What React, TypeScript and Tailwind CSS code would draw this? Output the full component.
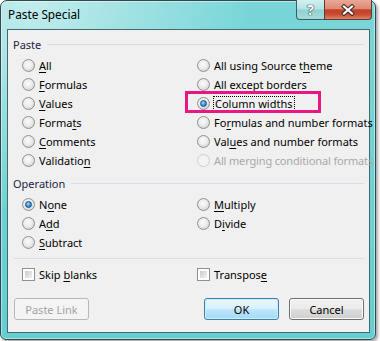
import React from "react";
import clsx from "clsx";

// "&" marks the access key letter, as in Win32 resource strings
function Accel({ text }: { text: string }) {
  const i = text.indexOf("&");
  if (i < 0) return <span>{text}</span>;
  return (
    <span>
      {text.slice(0, i)}
      <u className="underline-offset-[2px]">{text[i + 1]}</u>
      {text.slice(i + 2)}
    </span>
  );
}

function Radio({ checked, disabled }: { checked?: boolean; disabled?: boolean }) {
  return (
    <span
      className={clsx(
        "w-[13px] h-[13px] rounded-full border flex items-center justify-center shrink-0",
        disabled
          ? "border-[#cfcfcf] bg-[#f3f3f3]"
          : "border-[#8f9090] bg-[radial-gradient(circle_at_45%_40%,#fbfbfb_0%,#ececec_45%,#c4c4c4_100%)]"
      )}
    >
      {checked && (
        <span className="w-[7px] h-[7px] rounded-full border border-[#1d4d84] bg-[radial-gradient(circle_at_40%_35%,#9fdcff_0%,#3a8fdc_55%,#1b5aa0_100%)]" />
      )}
    </span>
  );
}

function Checkbox() {
  return (
    <span className="w-[13px] h-[13px] border border-[#8f9090] bg-white p-[2px] shrink-0 flex">
      <span className="flex-1 bg-[linear-gradient(135deg,#cbcbcb,#f4f4f4)]" />
    </span>
  );
}

function Option({
  label,
  checked,
  disabled,
  focused,
}: {
  label: string;
  checked?: boolean;
  disabled?: boolean;
  focused?: boolean;
}) {
  return (
    <div className="flex items-center h-[19px] gap-[3px] relative">
      <Radio checked={checked} disabled={disabled} />
      <span
        className={clsx(
          "whitespace-nowrap",
          disabled && "text-[#a9a9a9] tracking-[-0.15px]",
          focused ? "border border-dotted border-black px-px h-[15px] flex items-center" : "ml-px"
        )}
      >
        <Accel text={label} />
      </span>
      {focused && (
        <div className="absolute left-[-12px] top-[-3px] w-[136px] h-[22px] border-[3px] border-[#eb1583]" />
      )}
    </div>
  );
}

function GroupHeading({ label }: { label: string }) {
  return (
    <div className="h-[16px] flex items-center gap-[6px] text-[#1b2346]">
      <span>{label}</span>
      <div className="flex-1 h-px bg-[#d5dfe5]" />
    </div>
  );
}

function Button({ label, primary, disabled }: { label: string; primary?: boolean; disabled?: boolean }) {
  return (
    <div
      className={clsx(
        "w-[75px] h-[22px] rounded-[3px] border flex items-center justify-center",
        disabled
          ? "border-[#b5b9bc] bg-[#f4f4f4] text-[#a3a3a3]"
          : primary
          ? "border-[#3c7fb1] bg-[linear-gradient(#eaf6fd_0%,#d9f0fc_50%,#bee6fd_51%,#a7d9f5_100%)] shadow-[inset_0_0_0_1px_#c8f0ff]"
          : "border-[#707070] bg-[linear-gradient(#f2f2f2_0%,#ebebeb_50%,#dddddd_51%,#cfcfcf_100%)] shadow-[inset_0_0_0_1px_#fbfbfb]"
      )}
    >
      {label}
    </div>
  );
}

export default function App() {
  return (
    <div className="w-[380px] h-[341px] bg-white font-['Noto_Sans',sans-serif] text-[11px] leading-none text-black">
      <div className="w-[376px] h-[340px] flex flex-col pl-[6px] pr-[5px] pb-[6px] rounded-t-[7px] rounded-b-[6px] border border-[#34474a] bg-[radial-gradient(ellipse_at_8%_0%,rgba(255,255,255,0.55)_0%,rgba(255,255,255,0)_45%),linear-gradient(#79d6d8,#63cfd2)] shadow-[inset_0_0_0_1px_rgba(255,255,255,0.45),2px_2px_3px_rgba(0,0,0,0.35)]">
        {/* title bar */}
        <div className="h-[28px] flex items-start">
          <span className="ml-px self-center text-[11.8px]">Paste Special</span>
          <div className="ml-auto -mt-px -mr-[2px] flex h-[20px]">
            <div className="w-[28px] h-full rounded-bl-[4px] border border-t-0 border-r-0 border-[#3f5c5e] bg-[linear-gradient(#d3f0f0_0%,#b3e3e4_48%,#8fd1d3_52%,#a5dcdd_100%)] flex items-center justify-center font-bold text-[14px] text-white [text-shadow:0_0_1px_#2c3e40,0_0_1px_#2c3e40,0_0_1px_#2c3e40]">
              ?
            </div>
            <div className="w-[48px] h-full rounded-br-[4px] border border-t-0 border-[#5a3b35] bg-[linear-gradient(#eaa897_0%,#dd8b74_45%,#c2402a_52%,#c84a2f_75%,#de8366_100%)] flex items-center justify-center">
              <svg width="16" height="12" viewBox="0 0 16 12">
                <path d="M4 2.5 L12 9.5 M12 2.5 L4 9.5" stroke="#3a2a28" strokeWidth="4.2" strokeLinecap="square" />
                <path d="M4 2.5 L12 9.5 M12 2.5 L4 9.5" stroke="#ffffff" strokeWidth="2.2" strokeLinecap="square" />
              </svg>
            </div>
          </div>
        </div>

        {/* client area */}
        <div className="flex-1 border border-[#45686a] bg-[#f0f0f0] pl-[5px] pr-[5px] pt-[6px] flex flex-col">
          <GroupHeading label="Paste" />
          <div className="mt-[4px] ml-[9px] grid grid-cols-[175px_1fr]">
            <Option label="&All" />
            <Option label="All using Source t&heme" />
            <Option label="&Formulas" />
            <Option label="All e&xcept borders" />
            <Option label="&Values" />
            <Option label="Column &widths" checked focused />
            <Option label="Forma&ts" />
            <Option label="Fo&rmulas and number formats" />
            <Option label="&Comments" />
            <Option label="Val&ues and number formats" />
            <Option label="Validatio&n" />
            <Option label="All merging conditional formats" disabled />
          </div>

          <div className="mt-[5px]">
            <GroupHeading label="Operation" />
          </div>
          <div className="mt-[4px] ml-[9px] grid grid-cols-[175px_1fr]">
            <Option label="N&one" checked />
            <Option label="&Multiply" />
            <Option label="A&dd" />
            <Option label="D&ivide" />
            <Option label="&Subtract" />
          </div>

          <div className="mt-[6px] ml-px h-px bg-[#d5dfe5]" />

          <div className="mt-[6px] ml-[9px] grid grid-cols-[175px_1fr]">
            <div className="flex items-center h-[19px] gap-[4px]">
              <Checkbox />
              <span>
                Skip <Accel text="&blanks" />
              </span>
            </div>
            <div className="flex items-center h-[19px] gap-[4px]">
              <Checkbox />
              <Accel text="Transpos&e" />
            </div>
          </div>

          <div className="mt-[14px] flex gap-[10px]">
            <div className="ml-px mr-auto">
              <Button label="Paste Link" disabled />
            </div>
            <Button label="OK" primary />
            <Button label="Cancel" />
          </div>
        </div>
      </div>
    </div>
  );
}
